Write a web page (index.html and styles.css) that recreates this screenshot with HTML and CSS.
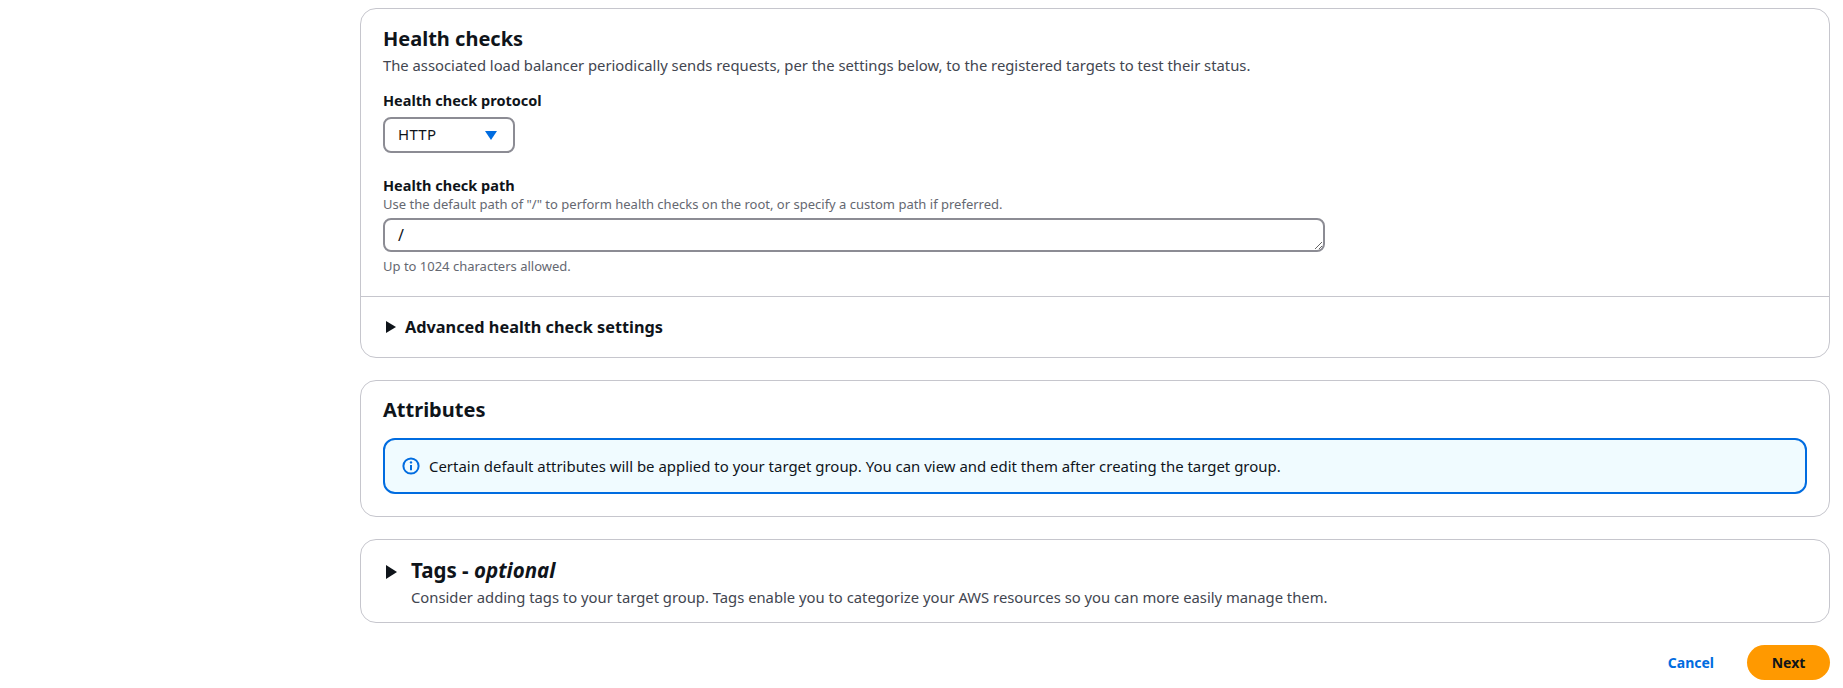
FILE: index.html
```html
<!DOCTYPE html>
<html lang="en">
<head>
<meta charset="utf-8">
<title>Target group</title>
<link rel="stylesheet" href="styles.css">
</head>
<body>
<main class="page">
  <section class="card">
    <div class="card-body">
      <h2 class="heading">Health checks</h2>
      <p class="desc">The associated load balancer periodically sends requests, per the settings below, to the registered targets to test their status.</p>
      <div class="label first-label">Health check protocol</div>
      <div class="select">
        <span>HTTP</span>
        <svg class="caret" width="12" height="9" viewBox="0 0 12 9"><path d="M0 0h12L6 9z" fill="#006ce0"/></svg>
      </div>
      <div class="label second-label">Health check path</div>
      <div class="hint">Use the default path of "/" to perform health checks on the root, or specify a custom path if preferred.</div>
      <textarea class="path" rows="1">/</textarea>
      <div class="hint after">Up to 1024 characters allowed.</div>
    </div>
    <div class="expander">
      <svg width="10" height="12" viewBox="0 0 10 12"><path d="M0 0l10 6-10 6z" fill="#0f141a"/></svg>
      <span>Advanced health check settings</span>
    </div>
  </section>

  <section class="card">
    <div class="attr-body">
      <h2 class="heading">Attributes</h2>
      <div class="info">
        <svg width="18" height="18" viewBox="0 0 18 18" fill="none"><circle cx="9" cy="9" r="7.6" stroke="#006ce0" stroke-width="2"/><path d="M9 8v5.2" stroke="#006ce0" stroke-width="2"/><circle cx="9" cy="5.4" r="1.2" fill="#006ce0"/></svg>
        <span>Certain default attributes will be applied to your target group. You can view and edit them after creating the target group.</span>
      </div>
    </div>
  </section>

  <section class="card tags">
    <svg class="tags-caret" width="11" height="14" viewBox="0 0 11 14"><path d="M0 0l11 7-11 7z" fill="#0f141a"/></svg>
    <div>
      <h2 class="heading tags-heading">Tags - <em>optional</em></h2>
      <p class="desc">Consider adding tags to your target group. Tags enable you to categorize your AWS resources so you can more easily manage them.</p>
    </div>
  </section>

  <div class="actions">
    <a class="cancel">Cancel</a>
    <a class="next">Next</a>
  </div>
</main>
</body>
</html>
```
FILE: styles.css
```css
* { box-sizing: border-box; }
html, body { margin: 0; padding: 0; background: #fff; }
body {
  font-family: "Noto Sans", "Open Sans", sans-serif;
  font-size: 14px;
  color: #0f141a;
  height: 688px;
  overflow: hidden;
}
.page { padding: 8px 13px 0 360px; }
.card {
  border: 1px solid #c6c6cd;
  border-radius: 16px;
  background: #fff;
  margin-bottom: 22px;
}
.card-body { padding: 16px 22px 0; height: 287px; }
.heading {
  margin: 0;
  font-size: 20px;
  line-height: 28px;
  font-weight: 700;
}
.heading em { font-weight: 700; font-style: italic; }
.tags-heading { font-size: 20.5px; }
.desc {
  margin: 2px 0 0;
  font-size: 14.8px;
  line-height: 20px;
  color: #424650;
}
.label { font-size: 14.5px; line-height: 18px; font-weight: 700; }
.first-label { margin-top: 16px; }
.select {
  margin-top: 8px;
  width: 132px;
  height: 36px;
  border: 2px solid #8c8c94;
  border-radius: 8px;
  display: flex;
  align-items: center;
  justify-content: space-between;
  padding: 0 16px 2px 13px;
  font-size: 15px;
  letter-spacing: 0.3px;
}
.caret { margin-top: 2px; }
.second-label { margin-top: 23px; margin-bottom: 1px; }
.hint { font-size: 13px; line-height: 18px; color: #656871; }
.path {
  display: block;
  margin-top: 5px;
  width: 942px;
  height: 34px;
  border: 2px solid #8c8c94;
  border-radius: 8px;
  padding: 4px 13px;
  font: 16px/22px "Noto Sans", "Open Sans", sans-serif;
  color: #0f141a;
  background: #fff;
  outline: none;
}
.after { margin-top: 5px; }
.expander {
  border-top: 1px solid #c6c6cd;
  height: 61px;
  display: flex;
  align-items: center;
  gap: 9px;
  padding: 0 0 0 25px;
  font-size: 16.3px;
  font-weight: 700;
}
.attr-body { padding: 15px 22px 22px; }
.info {
  margin-top: 14px;
  height: 56px;
  border: 2px solid #006ce0;
  border-radius: 12px;
  background: #f0fbff;
  display: flex;
  align-items: center;
  gap: 9px;
  padding: 0 0 0 17px;
  font-size: 14.94px;
}
.tags {
  display: flex;
  gap: 14px;
  height: 84px;
  padding: 16px 23px 0 25px;
  margin-bottom: 22px;
}
.tags-caret { margin-top: 9px; flex: none; }
.tags .desc { margin-top: 3px; }
.actions {
  display: flex;
  justify-content: flex-end;
  align-items: center;
  gap: 33px;
}
.cancel { color: #006ce0; font-weight: 700; font-size: 14px; }
.next {
  width: 83px;
  height: 35px;
  border-radius: 18px;
  background: #ff9900;
  display: flex;
  align-items: center;
  justify-content: center;
  font-weight: 700;
  font-size: 14px;
  color: #0f141a;
}
```
